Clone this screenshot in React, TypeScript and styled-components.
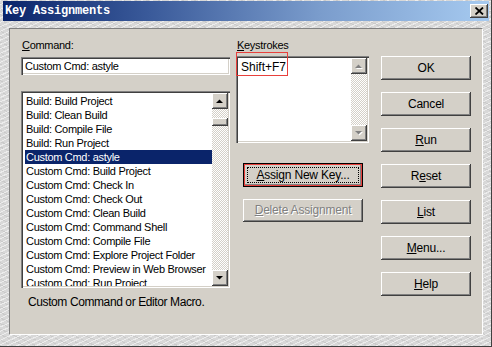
import React from "react";
import styled, { createGlobalStyle, css } from "styled-components";

const GlobalStyle = createGlobalStyle`
  body {
    margin: 0;
    background: #d4d0c8;
  }
`;

const commands = [
    "Build: Build Project",
    "Build: Clean Build",
    "Build: Compile File",
    "Build: Run Project",
    "Custom Cmd: astyle",
    "Custom Cmd: Build Project",
    "Custom Cmd: Check In",
    "Custom Cmd: Check Out",
    "Custom Cmd: Clean Build",
    "Custom Cmd: Command Shell",
    "Custom Cmd: Compile File",
    "Custom Cmd: Explore Project Folder",
    "Custom Cmd: Preview in Web Browser",
    "Custom Cmd: Run Project",
] as string[];

const sideButtons = [
    { label: "OK" },
    { label: "Cancel" },
    { label: "Run", key: "R", at: 0 },
    { label: "Reset", key: "e", at: 1 },
    { label: "List", key: "L", at: 0 },
    { label: "Menu...", key: "M", at: 0 },
    { label: "Help", key: "H", at: 0 },
] as { label: string; key?: string; at?: number }[];

const Mnemonic: React.FC<{ text: string; at?: number }> = ({ text, at }) => {
    if (at === undefined) return <>{text}</>;
    return (
        <>
            {text.slice(0, at)}
            <u>{text[at]}</u>
            {text.slice(at + 1)}
        </>
    );
};

const Arrow: React.FC<{ dir: "up" | "down"; disabled?: boolean }> = ({ dir, disabled }) => {
    const pts = dir === "up" ? "0,4 7,4 3.5,0.5" : "0,0 7,0 3.5,3.5";
    return (
        <svg width="8" height="5" viewBox="0 0 8 5">
            {disabled && <polygon points={pts} fill="#fff" transform="translate(1 1)" />}
            <polygon points={pts} fill={disabled ? "#808080" : "#000"} />
        </svg>
    );
};

const ScrollBar: React.FC<{ thumb?: boolean; disabled?: boolean }> = ({ thumb, disabled }) => (
    <ScrollTrack>
        <ScrollButton>
            <Arrow dir="up" disabled={disabled} />
        </ScrollButton>
        <TrackFill>{thumb && <Thumb />}</TrackFill>
        <ScrollButton>
            <Arrow dir="down" disabled={disabled} />
        </ScrollButton>
    </ScrollTrack>
);

export default function App() {
    return (
        <>
            <GlobalStyle />
            <Window>
                <TitleBar>
                    <Title>Key Assignments</Title>
                    <CloseButton>
                        <svg width="9" height="8" viewBox="0 0 9 8">
                            <path d="M0.5 0.5 L8 7.5 M8 0.5 L0.5 7.5" stroke="#000" strokeWidth="1.8" />
                        </svg>
                    </CloseButton>
                </TitleBar>

                <Frame>
                    <Panel>
                        <LeftColumn>
                            <Label>
                                <Mnemonic text="Command:" at={0} />
                            </Label>
                            <TextField>Custom Cmd: astyle</TextField>
                            <ListBox $height={197}>
                                <ListItems>
                                    {commands.map((c) => (
                                        <ListItem key={c} $selected={c === "Custom Cmd: astyle"}>
                                            {c}
                                        </ListItem>
                                    ))}
                                </ListItems>
                                <ScrollBar thumb />
                            </ListBox>
                            <Status>Custom Command or Editor Macro.</Status>
                        </LeftColumn>

                        <MiddleColumn>
                            <Label>
                                <Mnemonic text="Keystrokes" at={0} />
                            </Label>
                            <ListBox $height={87}>
                                <ListItems>
                                    <KeyItem>Shift+F7</KeyItem>
                                </ListItems>
                                <ScrollBar disabled />
                                <Marker />
                            </ListBox>
                            <AssignButton>
                                <FocusRing>
                                    <Mnemonic text="Assign New Key..." at={0} />
                                </FocusRing>
                            </AssignButton>
                            <DeleteButton disabled>
                                <Mnemonic text="Delete Assignment" at={0} />
                            </DeleteButton>
                        </MiddleColumn>

                        <RightColumn>
                            {sideButtons.map((b) => (
                                <SideButton key={b.label}>
                                    <Mnemonic text={b.label} at={b.at} />
                                </SideButton>
                            ))}
                        </RightColumn>
                    </Panel>
                </Frame>
            </Window>
        </>
    );
}

const uiFont = css`
    font-family: "Liberation Sans", Arial, sans-serif;
    font-size: 11px;
    letter-spacing: -0.3px;
    line-height: 13px;
    color: #000;
`;

const raised = css`
    background: #d4d0c8;
    box-shadow:
        inset -1px -1px #404040,
        inset 1px 1px #ffffff,
        inset -2px -2px #808080,
        inset 2px 2px #d4d0c8;
`;

const sunken = css`
    box-shadow:
        inset 1px 1px #808080,
        inset 2px 2px #404040,
        inset -1px -1px #ffffff,
        inset -2px -2px #d4d0c8;
`;

const textured = css`
    background-color: #d8d8d8;
    background-image:
        repeating-linear-gradient(155deg, rgba(255,255,255,0.55) 0 1px, transparent 1px 4px),
        repeating-linear-gradient(25deg, rgba(160,160,160,0.25) 0 1px, transparent 1px 5px);
`;

const Window = styled.div`
    width: 492px;
    height: 347px;
    box-sizing: border-box;
    display: flex;
    flex-direction: column;
    padding: 1px 2px 0 3px;
    border-right: 1px solid #404040;
    border-bottom: 1px solid #404040;
    ${textured};
`;

const TitleBar = styled.div`
    height: 20px;
    flex-shrink: 0;
    display: flex;
    align-items: center;
    justify-content: space-between;
    padding: 0 1px 0 2px;
    background: linear-gradient(90deg, #0a246a 0%, #3a5a9a 30%, #7a9ccc 65%, #a6caf0 100%);
`;

const Title = styled.span`
    font-family: "Liberation Mono", "Courier New", monospace;
    font-weight: bold;
    font-size: 12px;
    color: #fff;
    letter-spacing: -0.2px;
`;

const CloseButton = styled.div`
    width: 18px;
    height: 14px;
    display: flex;
    align-items: center;
    justify-content: center;
    ${raised};
`;

const Frame = styled.div`
    flex: 1;
    display: flex;
    padding: 7px 6px 11px 6px;
`;

const Panel = styled.div`
    flex: 1;
    display: flex;
    align-items: flex-start;
    padding: 10px 0 0 11px;
    background: #d4d0c8;
    border-top: 1px solid #808080;
    border-left: 1px solid #808080;
    border-right: 1px solid #ffffff;
    border-bottom: 1px solid #ffffff;
`;

const LeftColumn = styled.div`
    width: 209px;
    display: flex;
    flex-direction: column;
`;

const MiddleColumn = styled.div`
    width: 133px;
    margin-left: 6px;
    display: flex;
    flex-direction: column;
    align-items: flex-start;
`;

const RightColumn = styled.div`
    width: 90px;
    margin-left: 12px;
    margin-top: 17px;
    display: flex;
    flex-direction: column;
    gap: 12px;
`;

const Label = styled.div`
    ${uiFont};
    height: 13px;
    padding-left: 1px;
`;

const TextField = styled.div`
    ${uiFont};
    ${sunken};
    margin-top: 5px;
    height: 18px;
    box-sizing: border-box;
    padding: 3px 4px;
    background: #fff;
    white-space: nowrap;
`;

const ListBox = styled.div<{ $height: number }>`
    position: relative;
    height: ${(p) => p.$height}px;
    box-sizing: border-box;
    padding: 2px;
    display: flex;
    background: #fff;
    ${sunken};
    margin-top: 4px;
    align-self: stretch;

    ${LeftColumn} & {
        margin-top: 16px;
    }
`;

const ListItems = styled.div`
    flex: 1;
    overflow: hidden;
    padding: 1px 0 0 2px;
`;

const ListItem = styled.div<{ $selected?: boolean }>`
    ${uiFont};
    height: 14px;
    line-height: 14px;
    padding-left: 1px;
    white-space: nowrap;
    background: ${(p) => (p.$selected ? "#0a246a" : "transparent")};
    color: ${(p) => (p.$selected ? "#fff" : "#000")};
`;

const KeyItem = styled(ListItem)`
    font-size: 12px;
    letter-spacing: 0;
    padding-top: 1px;
`;

const ScrollTrack = styled.div`
    width: 16px;
    display: flex;
    flex-direction: column;
`;

const ScrollButton = styled.div`
    width: 16px;
    height: 16px;
    flex-shrink: 0;
    display: flex;
    align-items: center;
    justify-content: center;
    ${raised};
`;

const TrackFill = styled.div`
    flex: 1;
    background: repeating-conic-gradient(#ffffff 0 25%, #d4d0c8 0 50%) 0 0 / 2px 2px;
    padding-top: 9px;
`;

const Thumb = styled.div`
    height: 8px;
    ${raised};
`;

const Marker = styled.div`
    position: absolute;
    left: 0;
    top: -4px;
    width: 52px;
    height: 24px;
    box-sizing: border-box;
    border: 1px solid #e8403c;
    pointer-events: none;
`;

const buttonBase = css`
    ${uiFont};
    ${raised};
    border: none;
    height: 24px;
    box-sizing: border-box;
    display: flex;
    align-items: center;
    justify-content: center;
    padding: 0;
`;

const SideButton = styled.button`
    ${buttonBase};
    width: 90px;
    font-size: 12px;
    letter-spacing: -0.2px;
`;

const AssignButton = styled.button`
    ${buttonBase};
    width: 120px;
    margin: 20px 0 0 7px;
    padding: 3px;
    border: 1px solid #000;
    box-shadow:
        inset 0 0 0 1px #e8403c,
        inset -2px -2px #808080;
    font-size: 12px;
    letter-spacing: -0.2px;
`;

const FocusRing = styled.span`
    flex: 1;
    align-self: stretch;
    display: flex;
    align-items: center;
    justify-content: center;
    outline: 1px dotted #000;
    outline-offset: -1px;
`;

const DeleteButton = styled.button`
    ${buttonBase};
    width: 120px;
    height: 23px;
    margin: 12px 0 0 7px;
    font-size: 12px;
    letter-spacing: -0.2px;
    color: #808080;
    text-shadow: 1px 1px #ffffff;
`;

const Status = styled.div`
    ${uiFont};
    font-size: 12px;
    letter-spacing: -0.4px;
    margin-top: 8px;
    padding-left: 7px;
`;
